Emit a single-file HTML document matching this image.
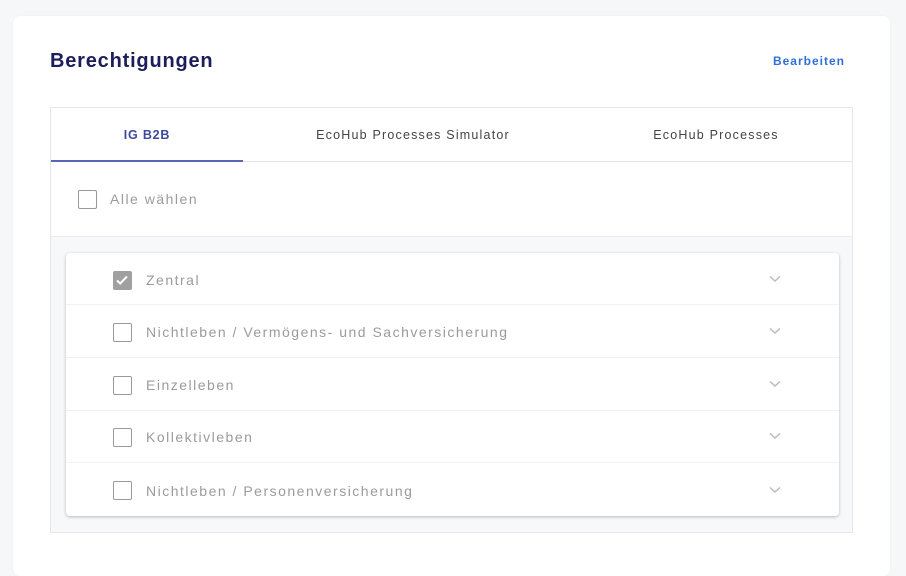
<!DOCTYPE html>
<html><head><meta charset="utf-8"><style>
*{box-sizing:border-box;margin:0;padding:0}
body{width:906px;height:564px;background:#f6f7f9;font-family:"Liberation Sans",sans-serif;position:relative;overflow:hidden}
.card{position:absolute;left:13px;top:16px;width:877px;height:560px;background:#fff;border-radius:7px;box-shadow:0 0 2px rgba(0,0,0,.05)}
.title{position:absolute;font-size:20px;font-weight:bold;color:#1c1e5c;letter-spacing:.8px}
.edit{position:absolute;font-size:12px;font-weight:bold;color:#2f6fd8;letter-spacing:1px}
.box{position:absolute;left:50px;top:107px;width:803px;height:426px;border:1px solid #e6e7ea;background:#f7f8fa}
.tabs{position:absolute;left:0;top:0;width:801px;height:54px;background:#fff;border-bottom:1px solid #e3e4e8}
.tab{position:absolute;top:0;height:54px;line-height:54px;text-align:center;font-size:12.5px;color:#444;letter-spacing:1.2px;white-space:nowrap}
.tab.a{color:#3c4a9e;font-weight:bold;border-bottom:2px solid #5866b8;letter-spacing:.8px}
.all{position:absolute;left:0;top:54px;width:801px;height:75px;background:#fff;border-bottom:1px solid #ececef}
.cb{position:absolute;width:19px;height:19px;border:1.5px solid #9a9a9a;border-radius:2px;background:#fff}
.lbl{position:absolute;font-size:14px;color:#9b9b9b;letter-spacing:1.5px;white-space:nowrap}
.inner{position:absolute;left:15px;top:145px;width:773px;height:263px;background:#fff;border-radius:4px;box-shadow:0 1px 3px rgba(0,0,0,.25)}
.row{position:absolute;left:0;width:773px;border-bottom:1px solid #f1f1f3}
.chev{position:absolute;left:703px;width:12px;height:8px}
</style></head><body>
<div class="card">
<div class="title" style="left:37px;top:34px">Berechtigungen</div>
<div class="edit" style="right:45px;top:38px">Bearbeiten</div>
</div>
<div class="box">
<div class="tabs">
<div class="tab a" style="left:0;width:192px">IG B2B</div>
<div class="tab" style="left:242px;width:240px">EcoHub Processes Simulator</div>
<div class="tab" style="left:565px;width:200px">EcoHub Processes</div>
</div>
<div class="all">
<div class="cb" style="left:27px;top:28px"></div>
<div class="lbl" style="left:59px;top:29px">Alle wählen</div>
</div>
<div class="inner">
<div class="row" style="top:0;height:52px">
<div class="cb" style="left:47px;top:18px;background:#a0a0a0;border-color:#a0a0a0"><svg width="16" height="16" viewBox="0 0 16 16" style="position:absolute;left:0;top:0"><path d="M3 8.5l3.2 3L13 4.5" stroke="#fff" stroke-width="2" fill="none"/></svg></div>
<div class="lbl" style="left:80px;top:19px">Zentral</div>
<svg class="chev" style="top:22px" viewBox="0 0 12 8"><path d="M1 1.5l5 4.5 5-4.5" stroke="#bbb" stroke-width="1.5" fill="none"/></svg>
</div>
<div class="row" style="top:52px;height:53px">
<div class="cb" style="left:47px;top:18px"></div>
<div class="lbl" style="left:80px;top:19px">Nichtleben / Vermögens- und Sachversicherung</div>
<svg class="chev" style="top:22px" viewBox="0 0 12 8"><path d="M1 1.5l5 4.5 5-4.5" stroke="#bbb" stroke-width="1.5" fill="none"/></svg>
</div>
<div class="row" style="top:105px;height:53px">
<div class="cb" style="left:47px;top:18px"></div>
<div class="lbl" style="left:80px;top:19px">Einzelleben</div>
<svg class="chev" style="top:22px" viewBox="0 0 12 8"><path d="M1 1.5l5 4.5 5-4.5" stroke="#bbb" stroke-width="1.5" fill="none"/></svg>
</div>
<div class="row" style="top:158px;height:52px">
<div class="cb" style="left:47px;top:17px"></div>
<div class="lbl" style="left:80px;top:18px">Kollektivleben</div>
<svg class="chev" style="top:21px" viewBox="0 0 12 8"><path d="M1 1.5l5 4.5 5-4.5" stroke="#bbb" stroke-width="1.5" fill="none"/></svg>
</div>
<div class="row" style="top:210px;height:53px;border:none">
<div class="cb" style="left:47px;top:18px"></div>
<div class="lbl" style="left:80px;top:20px">Nichtleben / Personenversicherung</div>
<svg class="chev" style="top:23px" viewBox="0 0 12 8"><path d="M1 1.5l5 4.5 5-4.5" stroke="#bbb" stroke-width="1.5" fill="none"/></svg>
</div>
</div>
</div>
</body></html>
